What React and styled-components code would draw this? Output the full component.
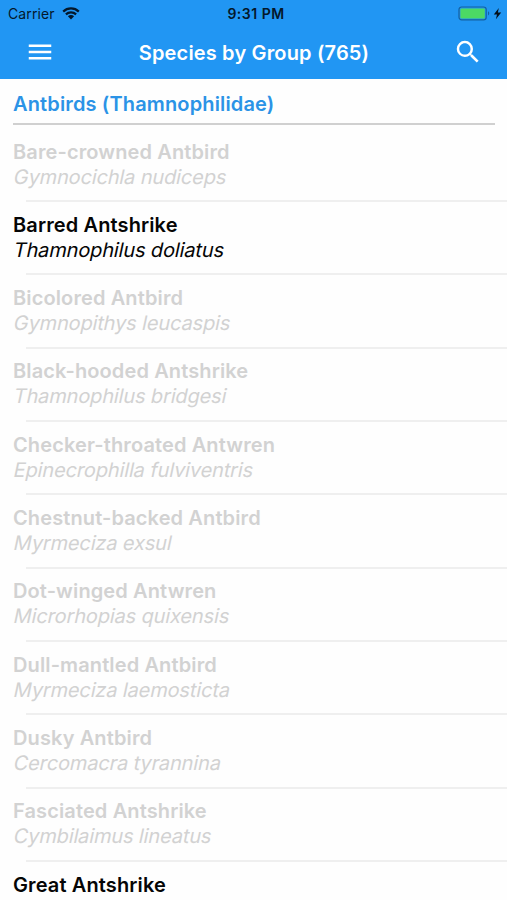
import styled, { createGlobalStyle } from "styled-components";
import { MdMenu, MdSearch } from "react-icons/md";

const species = [
  { name: "Bare-crowned Antbird", latin: "Gymnocichla nudiceps" },
  { name: "Barred Antshrike", latin: "Thamnophilus doliatus", seen: true },
  { name: "Bicolored Antbird", latin: "Gymnopithys leucaspis" },
  { name: "Black-hooded Antshrike", latin: "Thamnophilus bridgesi" },
  { name: "Checker-throated Antwren", latin: "Epinecrophilla fulviventris" },
  { name: "Chestnut-backed Antbird", latin: "Myrmeciza exsul" },
  { name: "Dot-winged Antwren", latin: "Microrhopias quixensis" },
  { name: "Dull-mantled Antbird", latin: "Myrmeciza laemosticta" },
  { name: "Dusky Antbird", latin: "Cercomacra tyrannina" },
  { name: "Fasciated Antshrike", latin: "Cymbilaimus lineatus" },
  { name: "Great Antshrike", seen: true },
];

const WifiIcon = () => (
  <svg width="18" height="13" viewBox="0 0 18 13" fill="none">
    <path
      d="M1.2 4.6C5.5.4 12.5.4 16.8 4.6M3.9 7.4C6.8 4.7 11.2 4.7 14.1 7.4"
      stroke="#04182b"
      strokeWidth="2.2"
    />
    <path d="M5.9 9.3C7.6 7.7 10.4 7.7 12.1 9.3L9 12.4Z" fill="#04182b" />
  </svg>
);

const BatteryIcon = () => (
  <svg width="44" height="15" viewBox="0 0 44 15">
    <rect x="1" y="1" width="27.2" height="12.8" rx="2.6" fill="#2196f3" stroke="#15619f" strokeWidth="1.2" />
    <rect x="2.4" y="2.4" width="24.4" height="10" rx="1.2" fill="#4cd964" />
    <path d="M30 5.3C31.7 6 31.7 8.8 30 9.5Z" fill="#15619f" />
    <path d="M40.8 2L35.8 8.5H39L37.9 13.2L43.2 6.5H39.9Z" fill="#04101c" />
  </svg>
);

const App = () => {
  return (
    <Screen>
      <GlobalStyle />
      <Header>
        <StatusBar>
          <Carrier>
            <span>Carrier</span>
            <WifiIcon />
          </Carrier>
          <Time>9:31 PM</Time>
          <Battery>
            <BatteryIcon />
          </Battery>
        </StatusBar>
        <NavBar>
          <IconButton aria-label="Menu">
            <MdMenu />
          </IconButton>
          <Title>Species by Group (765)</Title>
          <IconButton aria-label="Search">
            <MdSearch />
          </IconButton>
        </NavBar>
      </Header>
      <GroupTitle>Antbirds (Thamnophilidae)</GroupTitle>
      <List>
        {species.map(({ name, latin, seen }) => (
          <Row key={name} $seen={seen}>
            <Name>{name}</Name>
            {latin && <Latin>{latin}</Latin>}
          </Row>
        ))}
      </List>
    </Screen>
  );
};

const GlobalStyle = createGlobalStyle`
  * {
    box-sizing: border-box;
  }
  body {
    margin: 0;
    background: #fefefe;
    overflow: hidden;
  }
`;

const Screen = styled.div`
  display: flex;
  flex-direction: column;
  width: 100%;
  height: 900px;
  overflow: hidden;
  background: #fefefe;
  font-family: Inter, "Liberation Sans", sans-serif;
`;

const Header = styled.header`
  flex: none;
  height: 79px;
  background: #2196f3;
`;

const StatusBar = styled.div`
  display: grid;
  grid-template-columns: 1fr auto 1fr;
  align-items: center;
  height: 27px;
  padding: 0 5px 0 8px;
  color: #04182b;
  font-size: 14px;
`;

const Carrier = styled.div`
  display: flex;
  align-items: center;
  gap: 7px;
  letter-spacing: 0.1px;
`;

const Time = styled.div`
  padding-left: 2px;
  font-weight: 600;
  letter-spacing: 0.5px;
`;

const Battery = styled.div`
  display: flex;
  justify-content: flex-end;
`;

const NavBar = styled.nav`
  display: flex;
  align-items: center;
  justify-content: space-between;
  height: 50px;
  padding: 0 24px 0 25px;
`;

const IconButton = styled.button`
  display: flex;
  padding: 0;
  border: none;
  background: transparent;
  color: #fff;
  font-size: 30px;
  cursor: pointer;
`;

const Title = styled.h1`
  margin: 0;
  padding-top: 1px;
  color: #fff;
  font-size: 20px;
  font-weight: 600;
  letter-spacing: 0.16px;
  white-space: nowrap;
`;

const GroupTitle = styled.h2`
  flex: none;
  height: 46px;
  margin: 0 12px 0 13px;
  border-bottom: 2px solid #d0d0d0;
  color: #2b93e6;
  font-size: 20px;
  font-weight: 600;
  letter-spacing: 0.14px;
  line-height: 50px;
`;

const List = styled.ul`
  margin: 0;
  padding: 3.5px 0 0;
  list-style: none;
`;

const Row = styled.li`
  height: 73.33px;
  padding: 11px 0 0 13px;
  color: ${({ $seen }) => ($seen ? "#050505" : "#d2d2d2")};
  font-size: 20px;
  line-height: 25px;
  white-space: nowrap;
  &::after {
    content: "";
    display: block;
    height: 2px;
    margin: 10.5px 0 0 13px;
    background: #efefef;
  }
`;

const Name = styled.div`
  font-weight: 600;
  letter-spacing: 0.12px;
`;

/* slanted upright face, keeps the two-storey "a" */
const Latin = styled.div`
  width: max-content;
  margin-left: 1px;
  letter-spacing: -0.14px;
  transform: skewX(-12deg);
`;

export default App;
